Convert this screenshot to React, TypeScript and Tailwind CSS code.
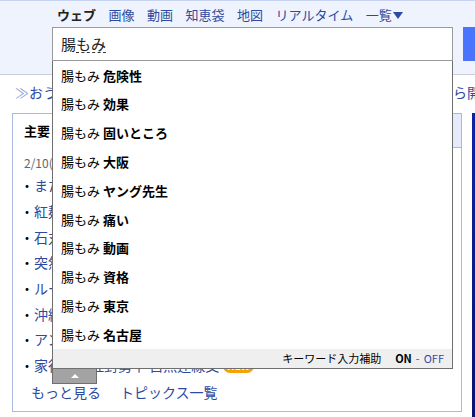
import React from "react";

const font = { fontFamily: '"Noto Sans CJK JP", "Noto Sans", sans-serif' };

const tabs = ["画像", "動画", "知恵袋", "地図", "リアルタイム"];

const suggestions = [
  "危険性",
  "効果",
  "固いところ",
  "大阪",
  "ヤング先生",
  "痛い",
  "動画",
  "資格",
  "東京",
  "名古屋",
];

const topics = [
  "またも大雪の予報 首都圏",
  "紅麹サプリ 新たな報告",
  "石丸氏 新党の方針",
  "突然の停電 原因調査",
  "ルール改正で議論",
  "沖縄で記録的な暖かさ",
  "アンケート結果を公表",
];

function SuggestBox() {
  return (
    <div className="absolute left-[52px] top-[61px] w-[401px]">
      <div className="bg-white border-x border-b border-[#6f6f6f]">
        {suggestions.map((s) => (
          <div
            key={s}
            className="h-[28.8px] flex items-center pl-[8px] text-[13px] text-black"
          >
            <span>腸もみ&nbsp;</span>
            <span className="font-bold">{s}</span>
          </div>
        ))}
        <div className="h-[19px] bg-[#efefef] flex items-center justify-end pr-[8px] text-[11px] text-black">
          <span>キーワード入力補助</span>
          <span className="ml-[14px] font-bold">ON</span>
          <span className="mx-[4px] text-[#555]">-</span>
          <span className="text-[#3549a8]">OFF</span>
        </div>
      </div>
      <div className="w-[45px] h-[15px] bg-[#a3a3a3] border-x border-b border-[#6f6f6f] flex items-center justify-center">
        <div className="w-0 h-0 border-x-[4px] border-x-transparent border-b-[4px] border-b-white" />
      </div>
    </div>
  );
}

export default function App() {
  return (
    <div
      className="relative w-[475px] h-[417px] overflow-hidden bg-white"
      style={font}
    >
      {/* header band */}
      <div className="h-[75px] bg-[#eef3fd] border-t border-[#c6d3f1] border-b border-b-[#c9cfdb]">
        <div className="pl-[57px] pt-[6px] flex items-center gap-[12.5px] text-[13px] leading-[16px] text-[#2d4aa0]">
          <span className="font-bold text-[#222]">ウェブ</span>
          {tabs.map((t) => (
            <span key={t}>{t}</span>
          ))}
          <span className="flex items-center">
            一覧
            <svg width="10" height="7" viewBox="0 0 10 7" className="ml-[1px]">
              <path d="M0 0h10L5 7z" fill="#2d4aa0" />
            </svg>
          </span>
        </div>
        <div className="mt-[4px] flex items-start">
          <div className="ml-[52px] w-[401px] h-[34px] bg-white border border-[#9a9a9a] flex items-center pl-[8px] text-[15px] text-[#222]">
            <span>腸</span>
            <span className="border-b border-dashed border-[#333] leading-[17px]">もみ</span>
          </div>
          <div className="ml-[10px] flex-1 h-[34px] bg-[#4a74fe]" />
        </div>
      </div>

      {/* page behind */}
      <div className="mt-[8px] flex items-center text-[14px] leading-[18px] text-[#2d4aa0] whitespace-nowrap">
        <span className="ml-[15px] w-[438px] shrink-0 overflow-hidden">
          <span className="text-[#8aa0d8]">≫</span>おうちで簡単にできる腸もみのやり方
        </span>
        <span className="shrink-0">ら開く</span>
      </div>

      <div className="mt-[12px] flex h-[304px]">
        <div className="ml-[12px] w-[450px] shrink-0 h-[299px] border border-[#a9badf]">
          <div className="flex h-[34px]">
            <div className="w-[70px] flex items-center pl-[11px] text-[13px] font-bold text-black">
              主要
            </div>
            <div className="flex-1 bg-[#e5ebfb] border-b border-l border-[#a9badf]" />
          </div>
          <div className="pl-[11px] pt-[8px] text-[12px] leading-[14px] text-[#666]">
            2/10(土) 12時30分更新
          </div>
          <div className="pt-[3px]">
            {topics.map((t) => (
              <div
                key={t}
                className="h-[25.7px] flex items-center text-[14px] text-[#2d4aa0] whitespace-nowrap"
              >
                <span className="w-[19px] pl-[7px] text-black">・</span>
                <span className="pl-[2px]">{t}</span>
              </div>
            ))}
            <div className="h-[25.7px] flex items-center text-[14px] text-[#2d4aa0] whitespace-nowrap">
              <span className="w-[19px] pl-[7px] text-black">・</span>
              <span className="pl-[2px]">家行こと社對勢辛 自無連線交</span>
              <span className="ml-[4px] h-[14px] px-[4px] rounded-full bg-[#f5a300] text-white text-[10px] leading-[14px] font-bold">
                NEW
              </span>
            </div>
          </div>
          <div className="h-[28px] flex items-center pl-[18px] text-[14px] text-[#2d4aa0]">
            <span>もっと見る</span>
            <span className="ml-[19px]">トピックス一覧</span>
          </div>
        </div>
        <div className="ml-auto w-[3px] bg-gradient-to-b from-[#0d22a8] to-[#0a1470]" />
      </div>

      <SuggestBox />
    </div>
  );
}
